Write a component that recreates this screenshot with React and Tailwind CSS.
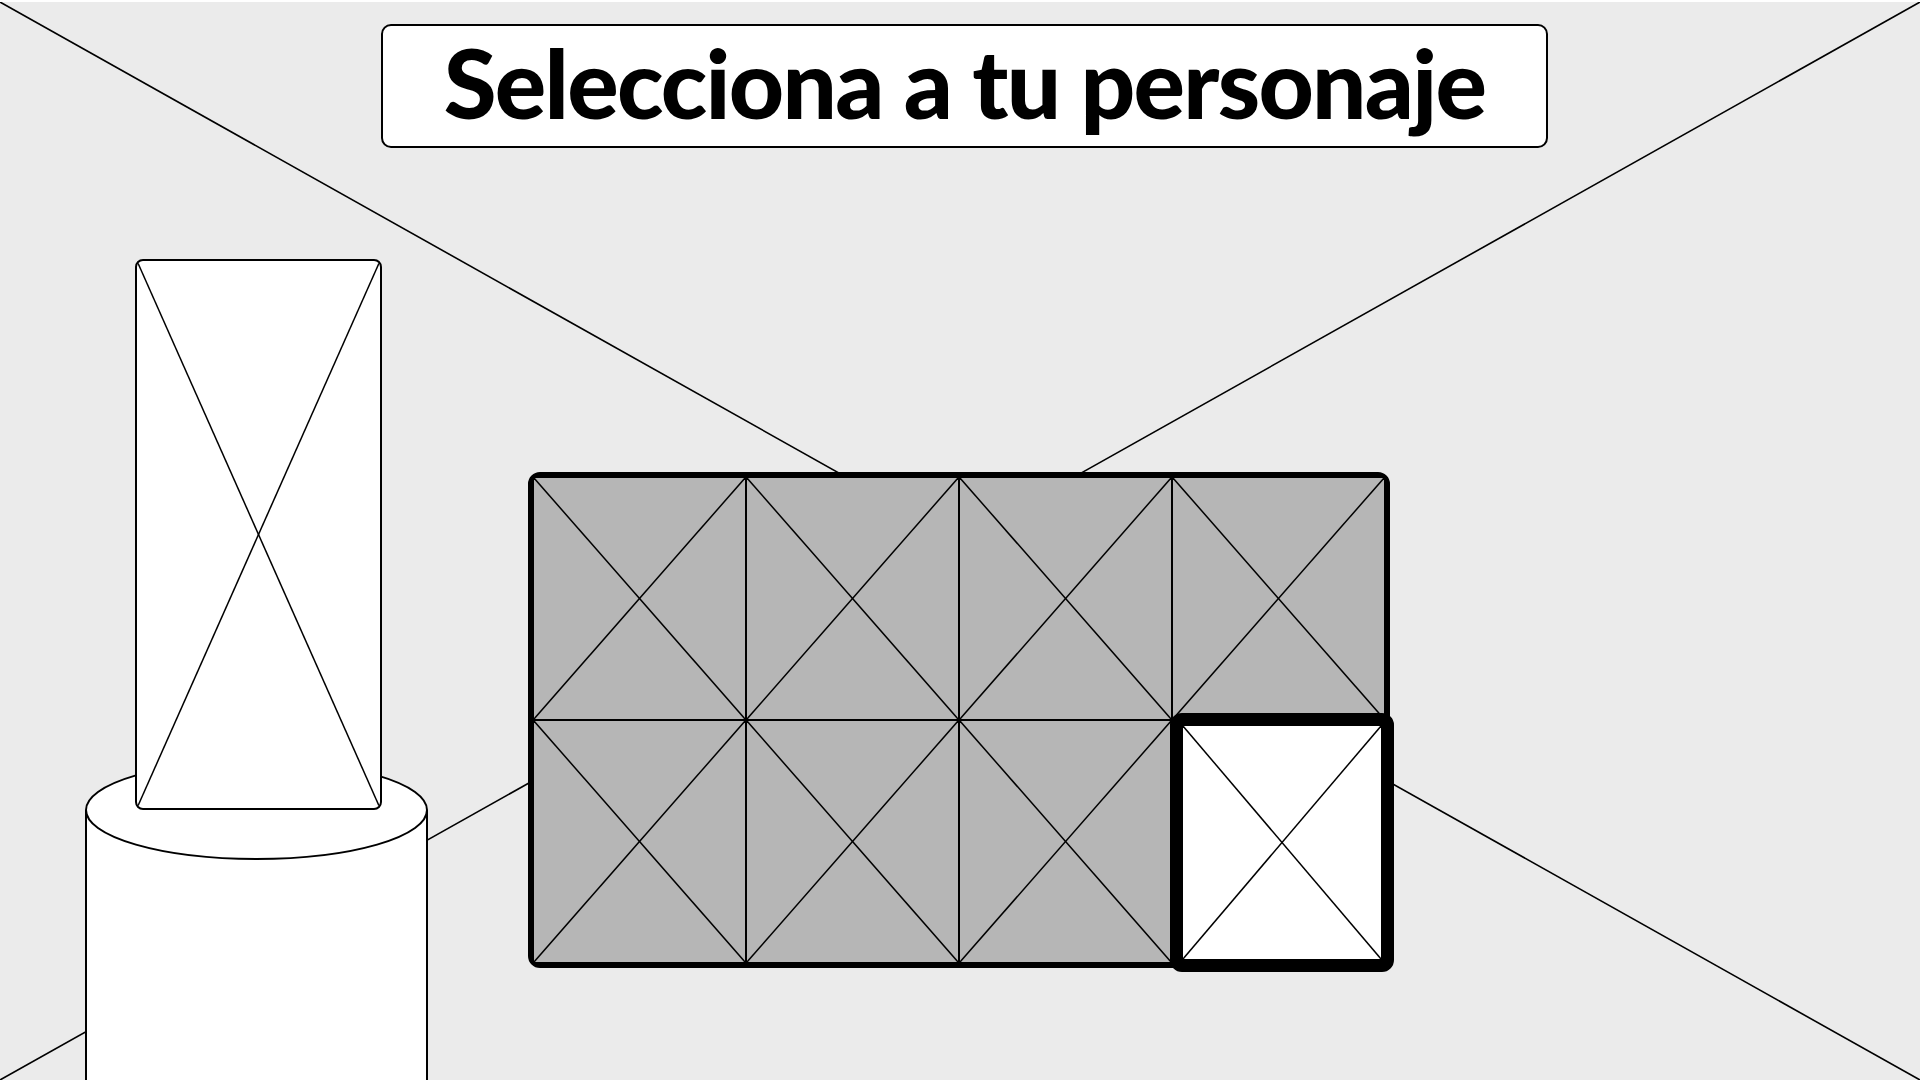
import React from 'react';

const Cross = ({ stroke = 1.5 }) => (
  <svg
    className="absolute inset-0 h-full w-full"
    viewBox="0 0 100 100"
    preserveAspectRatio="none"
  >
    <line x1="0" y1="0" x2="100" y2="100" stroke="#000" strokeWidth={stroke} vectorEffect="non-scaling-stroke" />
    <line x1="100" y1="0" x2="0" y2="100" stroke="#000" strokeWidth={stroke} vectorEffect="non-scaling-stroke" />
  </svg>
);

const Cell = ({ selected }) => {
  if (selected) {
    return (
      <div className="relative z-10 -mt-[8px] -mb-[10px] -ml-[3px] -mr-[10px] rounded-[12px] border-[13px] border-black bg-white">
        <Cross />
      </div>
    );
  }
  return (
    <div className="relative bg-[#b6b6b6]">
      <Cross />
    </div>
  );
};

const Pedestal = () => (
  <svg width="345" height="330" viewBox="0 0 345 330" className="block">
    <rect x="1" y="49" width="341" height="290" fill="#fff" />
    <line x1="1" y1="49" x2="1" y2="330" stroke="#000" strokeWidth="2" />
    <line x1="342" y1="49" x2="342" y2="330" stroke="#000" strokeWidth="2" />
    <ellipse cx="171.5" cy="49" rx="170.5" ry="49" fill="#fff" stroke="#000" strokeWidth="2" />
  </svg>
);

export default function App() {
  const cells = [false, false, false, false, false, false, false, true];

  return (
    <div className="relative h-[1080px] w-[1920px] overflow-hidden border-t-2 border-white bg-[#ebebeb]">
      {/* wireframe backdrop */}
      <svg className="absolute inset-0 h-[1078px] w-[1920px]" viewBox="0 0 1920 1078">
        <line x1="0" y1="0" x2="1920" y2="1078" stroke="#000" strokeWidth="1.6" />
        <line x1="1920" y1="0" x2="0" y2="1078" stroke="#000" strokeWidth="1.6" />
      </svg>

      <div className="relative flex flex-col">
        {/* Title */}
        <div className="ml-[381px] mt-[22px] flex h-[124px] w-[1167px] items-center justify-center rounded-[10px] border-2 border-black bg-white pb-[8px]">
          <h1 className="font-['Lato','Liberation_Sans',sans-serif] text-[96px] font-black leading-none tracking-[-0.018em] text-black">
            Selecciona a tu personaje
          </h1>
        </div>

        <div className="mt-[111px] flex items-start">
          {/* Preview on pedestal */}
          <div className="ml-[85px] flex w-[345px] flex-col">
            <div className="relative z-10 ml-[50px] h-[551px] w-[247px] overflow-hidden rounded-[8px] border-2 border-black bg-white">
              <Cross />
            </div>
            <div className="-mt-[49px]">
              <Pedestal />
            </div>
          </div>

          {/* Character grid */}
          <div className="ml-[98px] mt-[213px] grid h-[496px] w-[862px] grid-cols-4 grid-rows-2 gap-[2px] rounded-[12px] border-[6px] border-black bg-black">
            {cells.map((sel, i) => (
              <Cell key={i} selected={sel} />
            ))}
          </div>
        </div>
      </div>
    </div>
  );
}
